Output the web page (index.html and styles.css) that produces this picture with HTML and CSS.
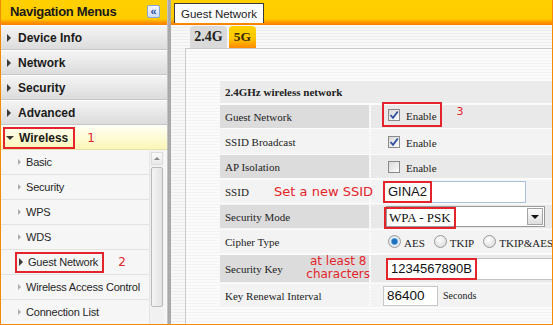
FILE: index.html
```html
<!DOCTYPE html>
<html>

<head>
    <title>Guest Network</title>
    <link rel="stylesheet" href="styles.css">
</head>

<body>
    <div class="frame">
        <div class="sidebar">
            <div class="side-head">
                <span>Navigation Menus</span>
                <span class="collapse">&laquo;</span>
            </div>
            <ul class="menu">
                <li><span class="tri"></span>Device Info</li>
                <li><span class="tri"></span>Network</li>
                <li><span class="tri"></span>Security</li>
                <li><span class="tri"></span>Advanced</li>
                <li class="open">
                    <span class="mark wl"><span class="tri-down"></span>Wireless</span>
                    <span class="num">1</span>
                </li>
            </ul>
            <div class="sub-wrap">
                <ul class="submenu">
                    <li><span class="chev"></span>Basic</li>
                    <li><span class="chev"></span>Security</li>
                    <li><span class="chev"></span>WPS</li>
                    <li><span class="chev"></span>WDS</li>
                    <li class="current">
                        <span class="mark gn"><span class="tri"></span>Guest Network</span>
                        <span class="num">2</span>
                    </li>
                    <li><span class="chev"></span>Wireless Access Control</li>
                    <li><span class="chev"></span>Connection List</li>
                </ul>
                <div class="scroll">
                    <div class="scroll-up"><span class="up"></span></div>
                    <div class="scroll-thumb"></div>
                </div>
            </div>
        </div>
        <div class="divider"></div>
        <div class="content">
            <div class="content-head">
                <div class="tab">Guest Network</div>
            </div>
            <div class="content-body">
                <div class="bands">
                    <span class="band">2.4G</span>
                    <span class="band active">5G</span>
                </div>
                <div class="panel">
                    <table class="form">
                        <colgroup>
                            <col class="c-lbl">
                            <col class="c-val">
                        </colgroup>
                        <tr class="head">
                            <td colspan="2">2.4GHz wireless network</td>
                        </tr>
                        <tr class="odd">
                            <td class="lbl">Guest Network</td>
                            <td class="val">
                                <div class="line">
                                    <span class="mark cb">
                                        <span class="check"><svg width="10" height="10" viewBox="0 0 10 10"><path d="M1.5 5 L4 7.8 L8.8 1.5" fill="none" stroke="#2f4f9f" stroke-width="1.8"/></svg></span>
                                        <span class="opt-text">Enable</span>
                                    </span>
                                    <span class="num three">3</span>
                                </div>
                            </td>
                        </tr>
                        <tr class="even">
                            <td class="lbl">SSID Broadcast</td>
                            <td class="val pad-cb">
                                <div class="line">
                                    <span class="check"><svg width="10" height="10" viewBox="0 0 10 10"><path d="M1.5 5 L4 7.8 L8.8 1.5" fill="none" stroke="#2f4f9f" stroke-width="1.8"/></svg></span>
                                    <span class="opt-text">Enable</span>
                                </div>
                            </td>
                        </tr>
                        <tr class="odd">
                            <td class="lbl">AP Isolation</td>
                            <td class="val pad-cb">
                                <div class="line">
                                    <span class="check"></span>
                                    <span class="opt-text">Enable</span>
                                </div>
                            </td>
                        </tr>
                        <tr class="even">
                            <td class="lbl note-cell">SSID<span class="note ssid-note">Set a new SSID</span></td>
                            <td class="val pad-in">
                                <div class="field ssid"><span class="mark in">GINA2</span></div>
                            </td>
                        </tr>
                        <tr class="odd">
                            <td class="lbl">Security Mode</td>
                            <td class="val pad-sel">
                                <div class="select">
                                    <span class="mark in">WPA - PSK</span>
                                    <span class="drop"><span class="down"></span></span>
                                </div>
                            </td>
                        </tr>
                        <tr class="even">
                            <td class="lbl">Cipher Type</td>
                            <td class="val pad-radio">
                                <div class="line">
                                    <span class="radio on"></span><span class="opt-text">AES</span>
                                    <span class="radio"></span><span class="opt-text">TKIP</span>
                                    <span class="radio"></span><span class="opt-text">TKIP&amp;AES</span>
                                </div>
                            </td>
                        </tr>
                        <tr class="odd key">
                            <td class="lbl note-cell">Security Key<span class="note key-note">at least 8<br>characters</span></td>
                            <td class="val pad-sel">
                                <div class="field keyf"><span class="mark in">1234567890B</span></div>
                            </td>
                        </tr>
                        <tr class="even">
                            <td class="lbl">Key Renewal Interval</td>
                            <td class="val pad-in">
                                <div class="line">
                                    <div class="field small">86400</div>
                                    <span class="secs">Seconds</span>
                                </div>
                            </td>
                        </tr>
                    </table>
                </div>
            </div>
        </div>
    </div>
</body>

</html>
```

FILE: styles.css
```css
* {
    box-sizing: border-box;
}

body {
    margin: 0;
    font-family: "Liberation Sans", Arial, sans-serif;
    color: #1a1a1a;
}

.frame {
    width: 553px;
    height: 325px;
    display: flex;
    border: 1px solid #f58a07;
    border-top: 0;
    overflow: hidden;
    background: #fff;
}

/* left navigation */

.sidebar {
    width: 166px;
    flex-shrink: 0;
    display: flex;
    flex-direction: column;
    background: #f6f6f6;
}

.side-head {
    height: 25px;
    flex-shrink: 0;
    display: flex;
    align-items: center;
    justify-content: space-between;
    padding: 0 7px 3px 9px;
    background: linear-gradient(#ffd000, #ffcc00 76%, #ff9a00 88%, #f67c00);
    font-weight: bold;
    font-size: 13px;
    letter-spacing: -0.3px;
}

.collapse {
    width: 13px;
    height: 13px;
    border: 1px solid #86a6d8;
    border-radius: 2px;
    background: linear-gradient(#f6f9ff, #cddcf4);
    color: #2a4f9e;
    font-size: 11px;
    line-height: 10px;
    text-align: center;
    letter-spacing: 0;
}

.menu,
.submenu {
    list-style: none;
    margin: 0;
    padding: 0;
}

.menu li {
    height: 25px;
    display: flex;
    align-items: center;
    padding-left: 6px;
    font-weight: bold;
    font-size: 12px;
    background: linear-gradient(#f4f4f4, #dcdcdc);
    border-top: 1px solid #fdfdfd;
    border-bottom: 1px solid #c6c6c6;
}

.menu li.open {
    padding-left: 2px;
    background: linear-gradient(#fffff4, #fbf6b6);
    border-bottom-color: #e6e2b0;
}

.tri {
    width: 0;
    height: 0;
    border-left: 4px solid #3a3a3a;
    border-top: 4px solid transparent;
    border-bottom: 4px solid transparent;
    margin-right: 7px;
}

.tri-down {
    width: 0;
    height: 0;
    border-top: 4px solid #3a3a3a;
    border-left: 4px solid transparent;
    border-right: 4px solid transparent;
    margin-right: 5px;
}

.mark {
    display: inline-flex;
    align-items: center;
    flex-shrink: 0;
    white-space: nowrap;
    border: 2px solid #e3252b;
}

.mark.wl {
    height: 22px;
    padding: 0 5px 0 1px;
}

.num {
    color: #e3252b;
    font-family: "DejaVu Sans", sans-serif;
    font-weight: normal;
    font-size: 12px;
    margin-left: 12px;
}

.sub-wrap {
    flex: 1;
    display: flex;
    min-height: 0;
}

.submenu {
    flex: 1;
}

.submenu li {
    height: 25px;
    display: flex;
    align-items: center;
    padding-left: 17px;
    font-size: 11px;
    letter-spacing: -0.2px;
    color: #262626;
    background: #f6f6f6;
    border-bottom: 1px solid #e2e2e2;
}

.submenu li.current {
    padding-left: 14px;
}

.mark.gn {
    height: 21px;
    padding: 0 4px 0 2px;
}

.mark.gn .tri {
    margin-right: 5px;
}

.submenu .num {
    margin-left: 14px;
    letter-spacing: 0;
}

.chev {
    width: 0;
    height: 0;
    border-left: 3px solid #ababab;
    border-top: 3px solid transparent;
    border-bottom: 3px solid transparent;
    margin-right: 5px;
}

.scroll {
    width: 15px;
    margin: 1px 3px 0 0;
    display: flex;
    flex-direction: column;
    background: #f1f1f1;
    border-left: 1px solid #e4e4e4;
}

.scroll-up {
    height: 13px;
    margin: 1px 1px 2px;
    border: 1px solid #dcdcdc;
    background: linear-gradient(#fbfbfb, #e8e8e8);
    display: flex;
    align-items: center;
    justify-content: center;
}

.up {
    width: 0;
    height: 0;
    border-bottom: 3px solid #8a8a8a;
    border-left: 3px solid transparent;
    border-right: 3px solid transparent;
}

.scroll-thumb {
    flex: 1;
    margin: 0 1px 17px;
    border: 1px solid #b9b9b9;
    border-radius: 2px;
    background: linear-gradient(90deg, #f4f4f4, #e2e2e2);
}

.divider {
    width: 4px;
    flex-shrink: 0;
    background: #a9a9a9;
    border-left: 1px solid #c4c4c4;
}

/* right content */

.content {
    flex: 1;
    display: flex;
    flex-direction: column;
    min-width: 0;
}

.content-head {
    height: 25px;
    flex-shrink: 0;
    padding: 3px 0 0 3px;
    background: linear-gradient(#ffd000, #ffcc00 76%, #ff9a00 88%, #f67c00);
}

.tab {
    display: inline-flex;
    align-items: center;
    height: 20px;
    padding: 0 6px;
    background: #fff;
    border: 1px solid #3a3a3a;
    border-bottom: 0;
    font-size: 11.5px;
    color: #222;
}

.content-body {
    flex: 1;
    display: flex;
    flex-direction: column;
    padding-left: 14px;
    background: repeating-linear-gradient(#f8f8f8 0 2px, #eeeeee 2px 3px);
}

.bands {
    display: flex;
    gap: 2px;
    height: 22px;
    margin-top: 1px;
    padding-left: 5px;
}

.band {
    display: flex;
    align-items: center;
    justify-content: center;
    width: 37px;
    border-radius: 4px 4px 0 0;
    background: #dadada;
    font-family: "Liberation Serif", serif;
    font-weight: bold;
    font-size: 14px;
    color: #222;
}

.band.active {
    width: 27px;
    font-size: 13.5px;
    background: linear-gradient(#ffd200, #ffc800 55%, #ff8c00);
    color: #3a2a00;
}

.panel {
    flex: 1;
    padding: 30px 0 0 32px;
    border-top: 1px solid #c9c9c9;
    border-left: 1px solid #c9c9c9;
    background: repeating-linear-gradient(#fbfbfb 0 2px, #f3f3f3 2px 3px);
}

.form {
    table-layout: fixed;
    width: 340px;
    border-spacing: 2px;
    font-family: "Liberation Serif", serif;
    font-size: 11px;
    color: #222;
}

.c-lbl {
    width: 149px;
}

.form td {
    height: 23px;
    padding: 0;
    white-space: nowrap;
}

.form tr.head td {
    height: 22px;
    padding-left: 5px;
    font-weight: bold;
    background: #ebebeb;
}

.form .lbl {
    padding-left: 5px;
}

.form tr.odd .lbl {
    background: #dcdcdc;
}

.form tr.odd .val {
    background: #e9e9e9;
}

.form tr.even td {
    background: #f3f3f3;
}

.form tr.key td {
    height: 27px;
}

.form .val {
    padding-left: 11px;
}

.form .pad-cb {
    padding-left: 17px;
}

.form .pad-in {
    padding-left: 12px;
}

.form .pad-sel {
    padding-left: 15px;
}

.form .pad-radio {
    padding-left: 17px;
}

.line {
    display: flex;
    align-items: center;
}

.mark.cb {
    height: 25px;
    margin-top: -4px;
    padding: 0 3px 0 4px;
}

.three {
    align-self: flex-start;
    margin: -1px 0 0 15px;
    font-size: 11px;
}

.check {
    display: inline-flex;
    align-items: center;
    justify-content: center;
    flex-shrink: 0;
    width: 12px;
    height: 12px;
    border: 1px solid #8a8a8a;
    background: linear-gradient(135deg, #d9d9d9, #fdfdfd);
}

.opt-text {
    flex-shrink: 0;
    margin-left: 6px;
    padding-top: 3px;
}

.note-cell {
    position: relative;
}

.note {
    position: absolute;
    color: #e3252b;
    font-family: "DejaVu Sans", sans-serif;
    text-align: center;
}

.ssid-note {
    right: -4px;
    top: 4px;
    font-size: 13px;
}

.key-note {
    right: -1px;
    top: 0;
    font-size: 12px;
    line-height: 13px;
}

.field {
    display: flex;
    align-items: center;
    flex-shrink: 0;
    height: 22px;
    background: #fff;
    border: 1px solid #b7c6d8;
    font-family: "Liberation Sans", Arial, sans-serif;
    font-size: 13px;
    color: #111;
}

.field.ssid {
    width: 143px;
    border-color: #a9c0dc;
}

.field.keyf {
    width: 175px;
    border-color: #c4c4c4;
}

.field.small {
    width: 55px;
    height: 20px;
    padding-left: 3px;
    font-size: 13.5px;
    border-color: #c8c8c8;
}

.mark.in {
    height: 22px;
    margin-left: -1px;
    padding: 0 3px 0 3px;
}

.select {
    display: flex;
    align-items: center;
    justify-content: space-between;
    width: 159px;
    height: 21px;
    background: #fff;
    border: 1px solid #9a9a9a;
    font-size: 13px;
    color: #111;
}

.select .mark.in {
    margin-top: 3px;
    margin-left: -3px;
}

.drop {
    display: flex;
    align-items: center;
    justify-content: center;
    width: 16px;
    height: 17px;
    margin-right: 1px;
    border: 1px solid #a4a4a4;
    background: linear-gradient(#fbfbfb, #dedede);
}

.down {
    width: 0;
    height: 0;
    border-top: 4px solid #111;
    border-left: 4px solid transparent;
    border-right: 4px solid transparent;
}

.radio {
    flex-shrink: 0;
    width: 13px;
    height: 13px;
    border: 1px solid #9a9a9a;
    border-radius: 50%;
    background: radial-gradient(circle at 40% 35%, #ffffff, #d4d4d4);
}

.radio.on {
    background: radial-gradient(circle, #1f6fbf 0 2.5px, #5ea3e0 3px, #e8f1fa 4px, #cfcfcf);
}

.radio + .opt-text {
    margin-left: 3px;
    margin-right: 9px;
    font-size: 11px;
}

.secs {
    margin-left: 5px;
    font-size: 10px;
}
```
